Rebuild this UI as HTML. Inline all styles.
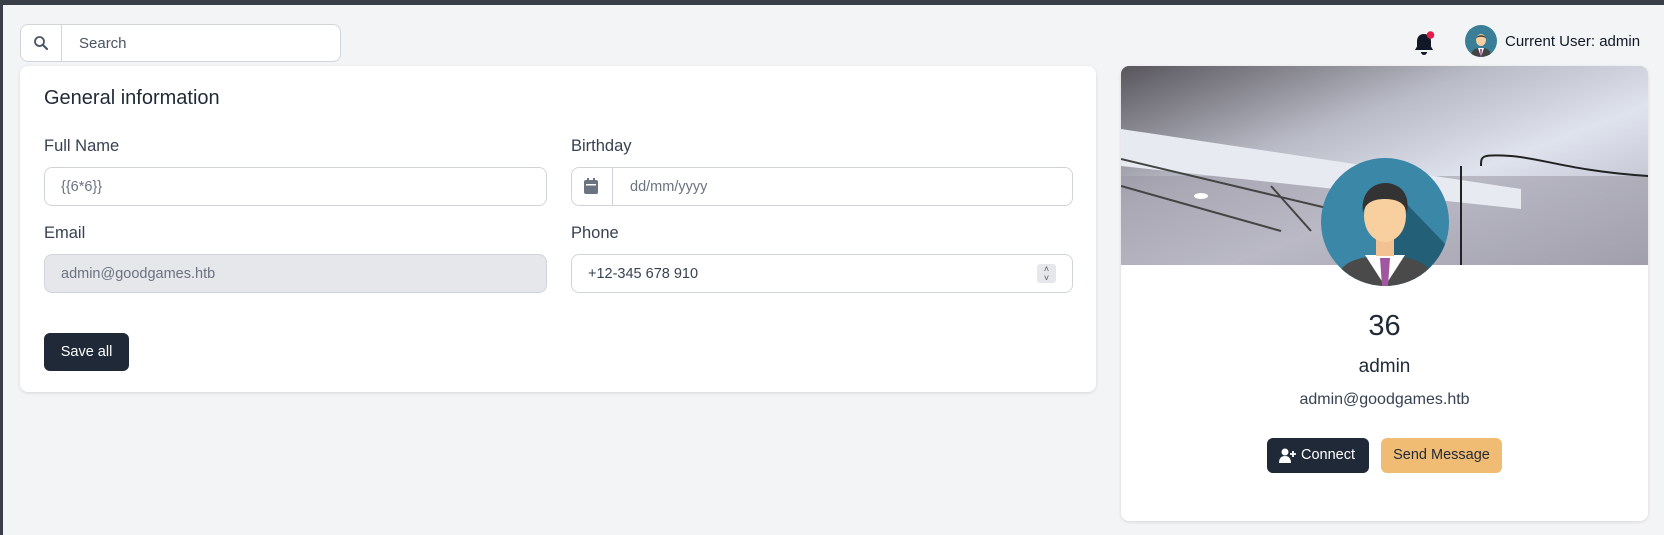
<!DOCTYPE html>
<html><head><meta charset="utf-8"><style>
*{box-sizing:border-box;margin:0;padding:0}
body{width:1664px;height:535px;background:#f3f4f6;font-family:"Liberation Sans",sans-serif;color:#1f2937;position:relative;overflow:hidden}
.top{position:absolute;left:0;top:0;width:1664px;height:5px;background:#3a3f47}
.lb{position:absolute;left:0;top:0;width:3px;height:535px;background:#3a3f47}
.search{position:absolute;left:20px;top:24px;width:321px;height:38px;background:#fff;border:1px solid #d1d5db;border-radius:8px}
.search .ic{position:absolute;left:0;top:0;width:41px;height:36px;border-right:1px solid #d1d5db}
.search span{position:absolute;left:58px;top:10px;font-size:15px;color:#4b5563}
.card{position:absolute;background:#fff;border-radius:8px;box-shadow:0 1px 3px rgba(0,0,0,.12)}
.lbl{position:absolute;font-size:16.5px;color:#374151}
.inp{position:absolute;height:39px;border:1px solid #d1d5db;border-radius:8px;background:#fff;font-size:14.5px;color:#6b7280;padding:11px 16px}
.btn{position:absolute;border-radius:6px;font-size:14.5px;text-align:center;line-height:35px}
</style></head><body>
<div class="top"></div><div class="lb"></div>
<div class="search"><div class="ic"><svg width="41" height="36" viewBox="0 0 41 36"><circle cx="18.5" cy="16.5" r="4.5" fill="none" stroke="#4b5563" stroke-width="1.8"/><path d="M22 20l4 4" stroke="#4b5563" stroke-width="2.2" stroke-linecap="round"/></svg></div><span>Search</span></div>

<svg style="position:absolute;left:1413px;top:30px" width="24" height="28" viewBox="0 0 24 28"><path d="M11 4c-4.5 0-7 3-7 7.5v5L2 20h18l-2-3.5v-5C18 7 15.5 4 11 4z" fill="#111827"/><path d="M8 22a3 3 0 0 0 6 0z" fill="#111827"/><circle cx="17.5" cy="5" r="3.8" fill="#e11d48"/></svg>
<svg style="position:absolute;left:1465px;top:25px" width="32" height="32" viewBox="0 0 32 32"><defs><clipPath id="c1"><circle cx="16" cy="16" r="16"/></clipPath></defs><g clip-path="url(#c1)"><rect width="32" height="32" fill="#3a7e98"/><path d="M6 32c0-7 4-9 10-9s10 2 10 9z" fill="#444"/><path d="M13 23h6l-3 9z" fill="#fff"/><path d="M15 24h2l-.5 8h-1z" fill="#a0509c"/><ellipse cx="16" cy="15" rx="5" ry="6" fill="#f8cfa0"/><path d="M11 14c0-5 10-5 10 0c0-3-10-3-10 0z" fill="#333"/></g></svg>
<div style="position:absolute;left:1505px;top:33px;font-size:15px;color:#111827">Current User: admin</div>

<div class="card" style="left:20px;top:66px;width:1076px;height:326px"></div>
<div style="position:absolute;left:44px;top:87px;font-size:20px;color:#1f2937">General information</div>
<div class="lbl" style="left:44px;top:137px">Full Name</div>
<div class="inp" style="left:44px;top:167px;width:503px">{{6*6}}</div>
<div class="lbl" style="left:571px;top:137px">Birthday</div>
<div class="inp" style="left:571px;top:167px;width:502px;padding-left:58px">dd/mm/yyyy</div>
<div style="position:absolute;left:612px;top:168px;width:1px;height:37px;background:#d1d5db"></div>
<svg style="position:absolute;left:583px;top:177px" width="16" height="18" viewBox="0 0 16 18"><rect x="1" y="3" width="14" height="14" rx="2" fill="#6b7280"/><rect x="4" y="1" width="2" height="4" fill="#6b7280"/><rect x="10" y="1" width="2" height="4" fill="#6b7280"/><rect x="3" y="7" width="10" height="1.5" fill="#fff"/></svg>
<div class="lbl" style="left:44px;top:224px">Email</div>
<div class="inp" style="left:44px;top:254px;width:503px;background:#e5e7eb">admin@goodgames.htb</div>
<div class="lbl" style="left:571px;top:224px">Phone</div>
<div class="inp" style="left:571px;top:254px;width:502px;color:#374151">+12-345 678 910</div>
<div style="position:absolute;left:1037px;top:264px;width:19px;height:19px;background:#e5e7eb;border-radius:3px;font-size:9px;line-height:9px;text-align:center;color:#555;padding-top:1px">˄<br>˅</div>
<div class="btn" style="left:44px;top:333px;width:85px;height:38px;background:#1f2937;color:#fff;line-height:38px">Save all</div>

<div class="card" style="left:1121px;top:66px;width:527px;height:455px;overflow:hidden">
<svg width="527" height="199" viewBox="0 0 527 199" style="display:block"><defs><linearGradient id="g" x1="0" y1="0" x2="1" y2="1"><stop offset="0" stop-color="#58555c"/><stop offset=".35" stop-color="#b9bbc6"/><stop offset=".6" stop-color="#dfe3ee"/><stop offset="1" stop-color="#a8a9b6"/></linearGradient></defs><rect width="527" height="199" fill="url(#g)"/><rect y="110" width="527" height="89" fill="#9a98a4" opacity=".55"/><path d="M0 63l400 60v20L0 100z" fill="#e8eaf2"/><path d="M0 120l160 45M0 93l210 50M150 120l40 45" stroke="#444" stroke-width="2"/><path d="M360 100c0-10 0-12 30-10s60 15 137 20" stroke="#222" stroke-width="2" fill="none"/><path d="M340 100v99" stroke="#222" stroke-width="2"/><ellipse cx="80" cy="130" rx="7" ry="3" fill="#fff"/></svg>
<div style="position:absolute;top:244px;width:527px;text-align:center;font-size:29px;color:#1f2937">36</div>
<div style="position:absolute;top:290px;width:527px;text-align:center;font-size:19px;color:#1f2937">admin</div>
<div style="position:absolute;top:325px;width:527px;text-align:center;font-size:16px;color:#374151">admin@goodgames.htb</div>
</div>
<svg style="position:absolute;left:1321px;top:158px" width="128" height="128" viewBox="0 0 128 128"><defs><clipPath id="c2"><circle cx="64" cy="64" r="64"/></clipPath></defs><g clip-path="url(#c2)"><rect width="128" height="128" fill="#3b87a7"/><path d="M80 40L128 90V128H60z" fill="#245f78"/><path d="M14 128c2-22 18-30 50-30s48 8 50 30z" fill="#4a4a4a"/><path d="M44 97h40l-20 31z" fill="#fff"/><path d="M59 100h10l-2 28h-6z" fill="#a057a0"/><rect x="55" y="78" width="18" height="20" fill="#f2c292"/><ellipse cx="64" cy="58" rx="21" ry="26" fill="#f8d0a0"/><path d="M42 55c-3-22 12-30 22-30s26 6 22 30c-2-10-10-14-22-14s-20 4-22 14z" fill="#333"/></g></svg>
<div class="btn" style="left:1267px;top:438px;width:102px;height:35px;background:#1f2937;color:#fff;padding-left:20px">Connect</div>
<svg style="position:absolute;left:1279px;top:448px" width="18" height="15" viewBox="0 0 18 15"><circle cx="6" cy="4" r="3.5" fill="#fff"/><path d="M0 15c0-5 2.5-7 6-7s6 2 6 7z" fill="#fff"/><path d="M14 3v6M11 6h6" stroke="#fff" stroke-width="1.8"/></svg>
<div class="btn" style="left:1381px;top:438px;width:121px;height:35px;background:#f0bc74;color:#1f2937">Send Message</div>
</body></html>
